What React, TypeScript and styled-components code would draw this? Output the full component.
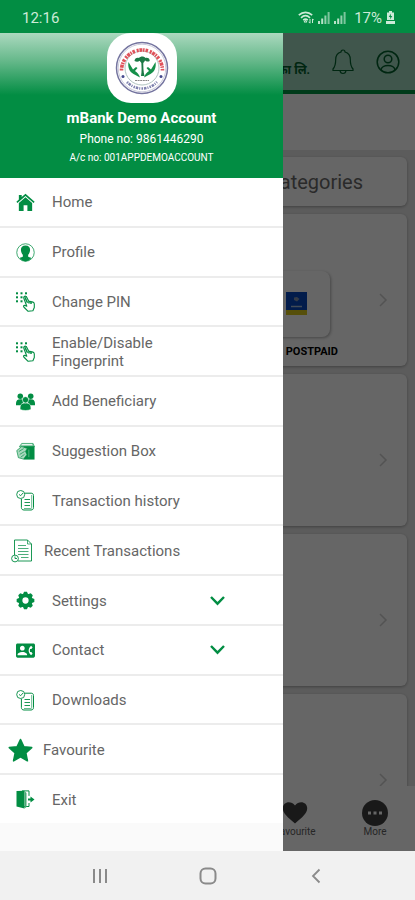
import React from "react";
import styled, { createGlobalStyle } from "styled-components";
import { MdContactPhone } from "react-icons/md";

const green = "#028d43";

const GlobalStyle = createGlobalStyle`
  * { box-sizing: border-box; }
  body { margin: 0; font-family: Roboto, "Noto Sans", sans-serif; background: #f1f1f1; }
  button { font: inherit; border: 0; background: none; padding: 0; margin: 0; cursor: pointer; }
  svg { display: block; flex: none; }
`;

const Phone = styled.div`
  min-height: 100vh;
  display: flex;
  flex-direction: column;
`;

const StatusBar = styled.header`
  height: 33px;
  padding: 2px 20px 0 22px;
  display: flex;
  align-items: center;
  background: ${green};
  color: #cdebd8;
  font-size: 15px;
`;

const StatusIcons = styled.div`
  margin-left: auto;
  display: flex;
  align-items: center;
  gap: 4px;
`;

const Percent = styled.span`
  margin-left: 4px;
`;

const Stage = styled.div`
  flex: 1;
  display: grid;
  grid-template-columns: minmax(0, 1fr);
  & > * { grid-area: 1 / 1; }
`;

const HomeScreen = styled.main`
  display: flex;
  flex-direction: column;
  background: #e6e6e6;
  overflow: hidden;
`;

const Scrim = styled.div`
  background: rgba(0, 0, 0, 0.6);
  z-index: 1;
`;

const AppBar = styled.div`
  height: 61px;
  padding: 0 15px 0 0;
  border-bottom: 4px solid #009541;
  background: #a0d6bd;
  color: #00602c;
  display: flex;
  align-items: center;
  justify-content: flex-end;
  gap: 22px;
`;

const BankName = styled.span`
  padding-top: 16px;
  font-size: 12px;
  font-weight: 700;
  line-height: 16px;
`;

const IconButton = styled.button`
  color: inherit;
`;

const Banner = styled.div`
  height: 56px;
  background: #fff;
`;

const Content = styled.div`
  flex: 1 0 0;
  min-height: 0;
  overflow: hidden;
  padding: 7px 8px 0;
  display: flex;
  flex-direction: column;
  gap: 8px;
`;

const Card = styled.section`
  flex: none;
  height: 152px;
  padding: 20px 16px 0 0;
  border-radius: 6px;
  background: #fff;
  box-shadow: 0 1px 3px rgba(0, 0, 0, 0.3);
  display: flex;
  align-items: center;
  justify-content: flex-end;
  color: #cfcfcf;
`;

const CategoriesCard = styled(Card)`
  height: 49px;
  padding: 0 44px 0 0;
`;

const CategoriesTitle = styled.h2`
  margin: 0;
  color: #6a6a6a;
  font-size: 20px;
  font-weight: 400;
`;

const CardBody = styled.div`
  flex: 1;
  display: flex;
  flex-direction: column;
  align-items: flex-end;
  gap: 8px;
  padding: 29px 37px 0 0;
`;

const ServiceTile = styled.div`
  width: 68px;
  height: 66px;
  margin-right: 8px;
  border-radius: 8px;
  background: #fff;
  box-shadow: 1px 1px 3px rgba(0, 0, 0, 0.3);
  display: flex;
  align-items: center;
  justify-content: center;
`;

const ServiceName = styled.span`
  color: #000;
  font-size: 11px;
  font-weight: 700;
  line-height: 14px;
`;

const BottomTabs = styled.nav`
  height: 65px;
  background: #fff;
  display: flex;
  justify-content: flex-end;
`;

const BottomTab = styled.button`
  width: 80px;
  display: flex;
  flex-direction: column;
  align-items: center;
  justify-content: center;
  color: #606060;
  font-size: 10px;
  line-height: 12px;
`;

const Drawer = styled.aside`
  z-index: 2;
  width: calc(100% - 132px);
  display: flex;
  flex-direction: column;
  background: #fff;
`;

const DrawerHeader = styled.div`
  height: 145px;
  display: flex;
  flex-direction: column;
  align-items: center;
  color: #fff;
  background: linear-gradient(#abd9bf 0, #65b88a 28px, ${green} 62px);
`;

const Badge = styled.div`
  width: 70px;
  height: 70px;
  margin-bottom: 5px;
  border-radius: 24px;
  background: #fff;
  display: flex;
  align-items: center;
  justify-content: center;
`;

const AccountName = styled.div`
  font-size: 15px;
  font-weight: 700;
  line-height: 20px;
`;

const AccountPhone = styled.div`
  font-size: 12px;
  line-height: 22px;
`;

const AccountNumber = styled.div`
  font-size: 10px;
  line-height: 15px;
`;

const Menu = styled.ul`
  flex: 1;
  margin: 0;
  padding: 0;
  list-style: none;
  display: flex;
  flex-direction: column;
`;

const MenuItem = styled.li`
  flex: 1 0 0;
  display: flex;
  border-bottom: 2px solid #ececec;
  &:last-child { border-bottom: 0; }
`;

type Slot = "normal" | "wide" | "star";
const slots = {
  normal: { pad: 16, gap: 17 },
  wide: { pad: 11, gap: 11 },
  star: { pad: 8, gap: 10 },
};

const MenuButton = styled.button<{ $slot: Slot }>`
  flex: 1;
  display: flex;
  align-items: center;
  padding: 1px 0 0 ${(p) => slots[p.$slot].pad}px;
  gap: ${(p) => slots[p.$slot].gap}px;
  color: ${green};
  text-align: left;
`;

const MenuLabel = styled.span`
  color: #666;
  width: 150px;
  font-size: 15px;
  line-height: 18px;
`;

const Chevron = styled.svg`
  margin-left: -9px;
`;

const DrawerFoot = styled.div`
  height: 28px;
  background: #fafafa;
`;

const SystemNav = styled.nav`
  height: 49px;
  background: #f1f1f1;
  color: #8a8a8a;
  display: flex;
  align-items: center;
  justify-content: center;
`;

const SystemButton = styled.button`
  width: 108px;
  height: 49px;
  color: inherit;
  display: flex;
  align-items: center;
  justify-content: center;
`;

const HomeIcon = () => (
  <svg width="19" height="19" viewBox="0 0 20 20" fill="currentColor">
    <path d="M3 4V2h3v2.2L10 .8l9.6 8.3-1.1 1.3L10 3.2 1.5 10.4.4 9.1 3 6.9z" />
    <path d="M3 10.4 10 4.5l7 5.9V19h-5v-6H8v6H3z" />
  </svg>
);

const ProfileIcon = () => (
  <svg width="19" height="19" viewBox="0 0 20 20">
    <circle cx="10" cy="10" r="9.2" fill="none" stroke="currentColor" strokeWidth=".8" />
    <path
      d="M10 2.600c3.400 0 4.900 2 4.800 4.900-.1 2-.9 3.700-2 4.800v2c.2.7 2.200.8 3.400 1.600C14.600 18 12.500 19.400 10 19.400S5.400 18 3.800 15.900c1.200-.8 3.200-.9 3.400-1.600v-2c-1.100-1.100-1.900-2.800-2-4.800C5.100 4.600 6.600 2.600 10 2.600z"
      fill="currentColor"
    />
  </svg>
);

const PinIcon = () => (
  <svg width="19" height="20" viewBox="0 0 19 20">
    <g fill="currentColor">
      {[0, 4, 8].flatMap((y) =>
        [0, 4.5, 9].map((x) =>
          x === 9 && y > 4 ? null : <rect key={`${x}-${y}`} x={x} y={y + 0.3} width="2" height="2" />
        )
      )}
    </g>
    <path
      d="M8.300 4.500c.9-.7 1.900-.3 2.300.6l2 4 4.400 1c1 .3 1.300 1 1.300 2v3.400l-1.400 3.200-4.800.6-4.300-4.300c-.8-.9.2-2 1.300-1.500l1.700.8-3-8c-.2-.8 0-1.400.5-1.800z"
      fill="#fff" stroke="currentColor" strokeWidth="1.1" strokeLinejoin="round"
    />
    <path d="m8.900 5.200 2.600 5.600M13 9.500v2M15 10v2" fill="none" stroke="currentColor" strokeWidth="1.500" />
  </svg>
);

const PeopleIcon = () => (
  <svg width="19" height="19" viewBox="0 0 20 20" fill="currentColor">
    <circle cx="4.500" cy="4.500" r="2.900" />
    <circle cx="15.500" cy="4.500" r="2.900" />
    <path d="M0 12c0-3 1.500-4.500 4.500-4.500 2 0 3 .6 3.700 1.800L6 14H0zM20 12c0-3-1.500-4.500-4.500-4.500-2 0-3 .6-3.700 1.800L14 14h6z" />
    <g stroke="#fff" strokeWidth=".6">
      <path d="M4.300 18.500c-.3-4.700 1-7 5.700-7s6 2.300 5.700 7c-3.800 1.300-7.600 1.300-11.400 0z" />
      <circle cx="10" cy="8.200" r="3.300" />
    </g>
  </svg>
);

const BoxIcon = () => (
  <svg width="19" height="19" viewBox="0 0 20 20">
    <path d="M3.500 5 6 1.500h12L19.500 5z" fill="#7fc6a0" stroke="currentColor" strokeWidth=".6" />
    <path d="M6 2.800h11" stroke="#fff" />
    <rect x="8" y="4.500" width="11.500" height="14" fill="currentColor" />
    <path d="M.8 9 6 4.800l6 2-2 3 1.500 3.500L8 18l-5.500-1.500z" fill="#a9d9be" stroke="currentColor" strokeWidth=".7" />
    <path d="m3 10 5-3M4 13l5-3M5 16l4-3" stroke="currentColor" strokeWidth=".7" />
    <path d="M13.500 8v8" stroke="#55b27e" />
  </svg>
);

const HistoryIcon = () => (
  <svg width="19" height="21" viewBox="0 0 19 21" fill="none" stroke="currentColor" strokeWidth="1">
    <path d="M8.500 3.200h6.700c1.500 0 2.300.9 2.300 2.300v12c0 1.500-.9 2.500-2.500 2.500H8c-1.700 0-2.600-1-2.600-2.500V9" />
    <path d="M15.700 5v12.500c0 .7-.3 1-.9 1H8" strokeWidth=".6" />
    <circle cx="4.700" cy="4.500" r="4" strokeWidth=".9" />
    <path d="m3 4.400 1.700 1.300L7 3M8.500 9.500H14M8.500 12.500H14M8.500 15.500H14" strokeWidth=".9" />
  </svg>
);

const ReceiptIcon = () => (
  <svg width="22" height="24" viewBox="0 0 22 24" fill="none" stroke="currentColor" strokeWidth=".9">
    <path d="M3.500 16V1h13l4 4v17H7" />
    <path d="M16.500 1v4h4M7 6.500h8M7 9.500h10.500M7 12.500h10.500M7 15.500h10.500M10 18.500h7.500" strokeWidth=".7" />
    <circle cx="4" cy="19.500" r="3.400" />
    <path d="M4 17.500v2h2" />
  </svg>
);

const GearIcon = () => (
  <svg width="19" height="19" viewBox="0 0 20 20">
    <g fill="currentColor">
      {[0, 45, 90, 135, 180, 225, 270, 315].map((a) => (
        <path key={a} d="M6.500 5 8.500.7h3L13.500 5z" transform={`rotate(${a} 10 10)`} />
      ))}
    </g>
    <circle cx="10" cy="10" r="5.200" fill="#fff" stroke="currentColor" strokeWidth="3.800" />
  </svg>
);

const StarIcon = () => (
  <svg width="25" height="24" viewBox="0 0 25 24" fill="currentColor">
    <path
      d="m12.500 1.500 3.300 7.200 7.900.9-5.900 5.400 1.600 7.800-6.900-3.900-6.900 3.900 1.600-7.800L1.300 9.600l7.900-.9z"
      stroke="currentColor" strokeWidth="1.600" strokeLinejoin="round"
    />
  </svg>
);

const ExitIcon = () => (
  <svg width="19" height="19" viewBox="0 0 19 19">
    <path d="M6 .9h7v5M13 13v3.500H8" fill="none" stroke="currentColor" strokeWidth="1" />
    <path d="M.5 1 8.500.7V18.600L.5 16.500z" fill="currentColor" />
    <path d="M8.500 1 10.500 3v14l-2 1.600z" fill="#48a974" />
    <path d="M12 8.500h2.500V6.500l4 3-4 3v-2H12z" fill="currentColor" />
  </svg>
);

const Seal = () => (
  <svg width="54" height="54" viewBox="0 0 54 54" fill="none" role="img" aria-label="Bank emblem">
    <circle cx="27" cy="27" r="25.500" stroke="#74749f" strokeWidth="1.500" />
    <circle cx="27" cy="27" r="23.800" stroke="#b4b4cb" strokeWidth=".7" />
    <circle cx="27" cy="27" r="17" stroke="#a6bcb8" strokeWidth=".9" />
    <path d="M6.500 29.500A20.500 20.500 0 1 1 47.500 29.500" stroke="#e0525a" strokeWidth="3.600" strokeDasharray="2 .8 3 .7 1.500 1 2.500 1.800" />
    <path d="M12 41A20.500 20.500 0 0 0 42 41" stroke="#7d80ad" strokeWidth="2.600" strokeDasharray="1.500 .9 2.500 1 1 1.200" />
    <circle cx="8" cy="35.500" r="1.500" fill="#454b8e" />
    <circle cx="46" cy="35.500" r="1.500" fill="#454b8e" />
    <path d="M26 35c1-5 .5-9 .3-14h2c0 5 0 9 1.200 14z" fill="#1b7946" />
    <path d="M19.500 20c0-3 3-4 4.500-3 1.500-2 5-2 6.500 0 2-.8 4.500.5 4.200 3-2 1.300-3.700.2-4.700-.4-1 1.800-1.500 2.400-2.700 2.400s-2-1-2.600-2.200c-1.500 1.200-3.400 1.300-5.200.2z" fill="#1b7946" />
    <path d="M13.500 21c-1 5 1 10 5 12l6.500 3.500c-.8-3-2.600-5-5-6.500l2.500-3-1.500-1-3 2.500zM40.500 21c1 5-1 10-5 12L29 36.500c.8-3 2.600-5 5-6.500l-2.500-3 1.500-1 3 2.500z" fill="#15904a" />
    <path d="M20 39.500h14" stroke="#888" strokeWidth="1" strokeDasharray="2 .6" />
  </svg>
);

const CardChevron = () => (
  <svg width="16" height="16" viewBox="0 0 16 16" fill="none" stroke="currentColor" strokeWidth="1.500">
    <path d="m5 2 6 6-6 6" />
  </svg>
);

const Signal = () => (
  <svg width="12" height="12" viewBox="0 0 12 12" fill="currentColor">
    <rect x="0" y="9" width="2" height="3" opacity=".9" />
    <rect x="3.200" y="6.500" width="2" height="5.500" opacity=".9" />
    <rect x="6.400" y="3.500" width="2" height="8.500" opacity=".7" />
    <rect x="9.600" y="0" width="2" height="12" opacity=".6" />
  </svg>
);

type Entry = { label: string; icon: React.ReactNode; slot?: Slot; expandable?: boolean };

const entries: Entry[] = [
  { label: "Home", icon: <HomeIcon /> },
  { label: "Profile", icon: <ProfileIcon /> },
  { label: "Change PIN", icon: <PinIcon /> },
  { label: "Enable/Disable Fingerprint", icon: <PinIcon /> },
  { label: "Add Beneficiary", icon: <PeopleIcon /> },
  { label: "Suggestion Box", icon: <BoxIcon /> },
  { label: "Transaction history", icon: <HistoryIcon /> },
  { label: "Recent Transactions", icon: <ReceiptIcon />, slot: "wide" },
  { label: "Settings", icon: <GearIcon />, expandable: true },
  { label: "Contact", icon: <MdContactPhone size={19} />, expandable: true },
  { label: "Downloads", icon: <HistoryIcon /> },
  { label: "Favourite", icon: <StarIcon />, slot: "star" },
  { label: "Exit", icon: <ExitIcon /> },
];

export default function App() {
  return (
    <Phone>
      <GlobalStyle />
      <StatusBar>
        <span>12:16</span>
        <StatusIcons>
          <svg width="16" height="13" viewBox="0 0 16 13" fill="none" stroke="currentColor" strokeWidth="1.600">
            <path d="M.8 4.200c4-3.800 9.400-3.800 13.400 0M3 6.800c2.800-2.600 6.200-2.600 9 0M5.200 9.200c1.500-1.300 3.100-1.300 4.600 0" />
            <path d="m7.500 9 1.500 2H6zM12 8v4M10.700 10.800 12 12.300M14.500 12V8M15.700 9.200 14.500 7.800" strokeWidth="1" />
          </svg>
          <Signal />
          <Signal />
          <Percent>17%</Percent>
          <svg width="9" height="13" viewBox="0 0 9 13" fill="currentColor">
            <path d="M3 0h3v1.500h2V9H1V1.500h2zM0 10h9v3H0z" />
            <path d="M5 2.500 2.800 6h1.500L4 8.500 6.300 5H4.800z" fill={green} />
          </svg>
        </StatusIcons>
      </StatusBar>

      <Stage>
        <HomeScreen>
          <AppBar>
            <BankName>का लि.</BankName>
            <IconButton aria-label="Notifications">
              <svg width="22" height="26" viewBox="0 0 22 26" fill="none" stroke="currentColor" strokeWidth="1.200">
                <path d="M9 3c0-2.700 4-2.700 4 0 3.700 1 5.300 4 5.300 7.500 0 5 .4 7 2.700 9.500v1.500H1V20c2.300-2.500 2.700-4.500 2.700-9.500C3.700 7 5.300 4 9 3zM8 21.500c.4 4 5.600 4 6 0" />
              </svg>
            </IconButton>
            <IconButton aria-label="Account">
              <svg width="24" height="24" viewBox="0 0 24 24" fill="none" stroke="currentColor" strokeWidth="1.500">
                <circle cx="12" cy="12" r="10.800" />
                <circle cx="12" cy="9" r="3.800" />
                <path d="M5 20c.4-6 13.600-6 14 0" />
              </svg>
            </IconButton>
          </AppBar>
          <Banner />
          <Content>
            <CategoriesCard>
              <CategoriesTitle>Categories</CategoriesTitle>
            </CategoriesCard>
            <Card>
              <CardBody>
                <ServiceTile>
                  <svg width="21" height="23" viewBox="0 0 21 23">
                    <path d="M0 0h21v23H0z" fill="#0646bb" />
                    <path d="M0 18h21v5H0z" fill="#d6c51b" />
                    <path d="M8 5.500 11 5l2.500 2L11 9.500 8 8z" fill="#8294ae" />
                    <path d="M5 14.500h11" stroke="#a3bbd6" strokeWidth="1.500" />
                  </svg>
                </ServiceTile>
                <ServiceName>POSTPAID</ServiceName>
              </CardBody>
              <CardChevron />
            </Card>
            <Card><CardChevron /></Card>
            <Card><CardChevron /></Card>
            <Card><CardChevron /></Card>
          </Content>
          <BottomTabs>
            <BottomTab>
              <svg width="26" height="26" viewBox="0 0 26 26" fill="#404040">
                <path d="M13 23.500C6 17.500.8 13.500.8 8.300.8 1.500 9 0 13 5.500 17 0 25.200 1.500 25.200 8.300c0 5.200-5.200 9.200-12.200 15.200z" />
              </svg>
              Favourite
            </BottomTab>
            <BottomTab>
              <svg width="26" height="26" viewBox="0 0 26 26">
                <circle cx="13" cy="13" r="13" fill="#404040" />
                <path d="M6 11.500h3v3H6zM11.500 11.500h3v3h-3zM17 11.500h3v3h-3z" fill="#fff" />
              </svg>
              More
            </BottomTab>
          </BottomTabs>
        </HomeScreen>
        <Scrim />
        <Drawer>
          <DrawerHeader>
            <Badge><Seal /></Badge>
            <AccountName>mBank Demo Account</AccountName>
            <AccountPhone>Phone no: 9861446290</AccountPhone>
            <AccountNumber>A/c no: 001APPDEMOACCOUNT</AccountNumber>
          </DrawerHeader>
          <Menu>
            {entries.map((e) => (
              <MenuItem key={e.label}>
                <MenuButton $slot={e.slot ?? "normal"} aria-expanded={e.expandable ? false : undefined}>
                  {e.icon}
                  <MenuLabel>{e.label}</MenuLabel>
                  {e.expandable && (
                    <Chevron width="15" height="10" viewBox="0 0 15 10" fill="none" stroke="currentColor" strokeWidth="2.400">
                      <path d="m1 1 6.500 6.700L14 1" />
                    </Chevron>
                  )}
                </MenuButton>
              </MenuItem>
            ))}
          </Menu>
          <DrawerFoot />
        </Drawer>
      </Stage>

      <SystemNav>
        <SystemButton aria-label="Recent apps">
          <svg width="16" height="16" viewBox="0 0 16 16" stroke="currentColor" strokeWidth="2">
            <path d="M2 1v14M8 1v14M14 1v14" />
          </svg>
        </SystemButton>
        <SystemButton aria-label="Home">
          <svg width="18" height="18" viewBox="0 0 18 18" fill="none" stroke="currentColor" strokeWidth="2">
            <rect x="1.500" y="1.500" width="15" height="15" rx="5" />
          </svg>
        </SystemButton>
        <SystemButton aria-label="Back">
          <svg width="10" height="16" viewBox="0 0 10 16" fill="none" stroke="currentColor" strokeWidth="1.800">
            <path d="M8.500 1.500 2 8l6.500 6.500" />
          </svg>
        </SystemButton>
      </SystemNav>
    </Phone>
  );
}
